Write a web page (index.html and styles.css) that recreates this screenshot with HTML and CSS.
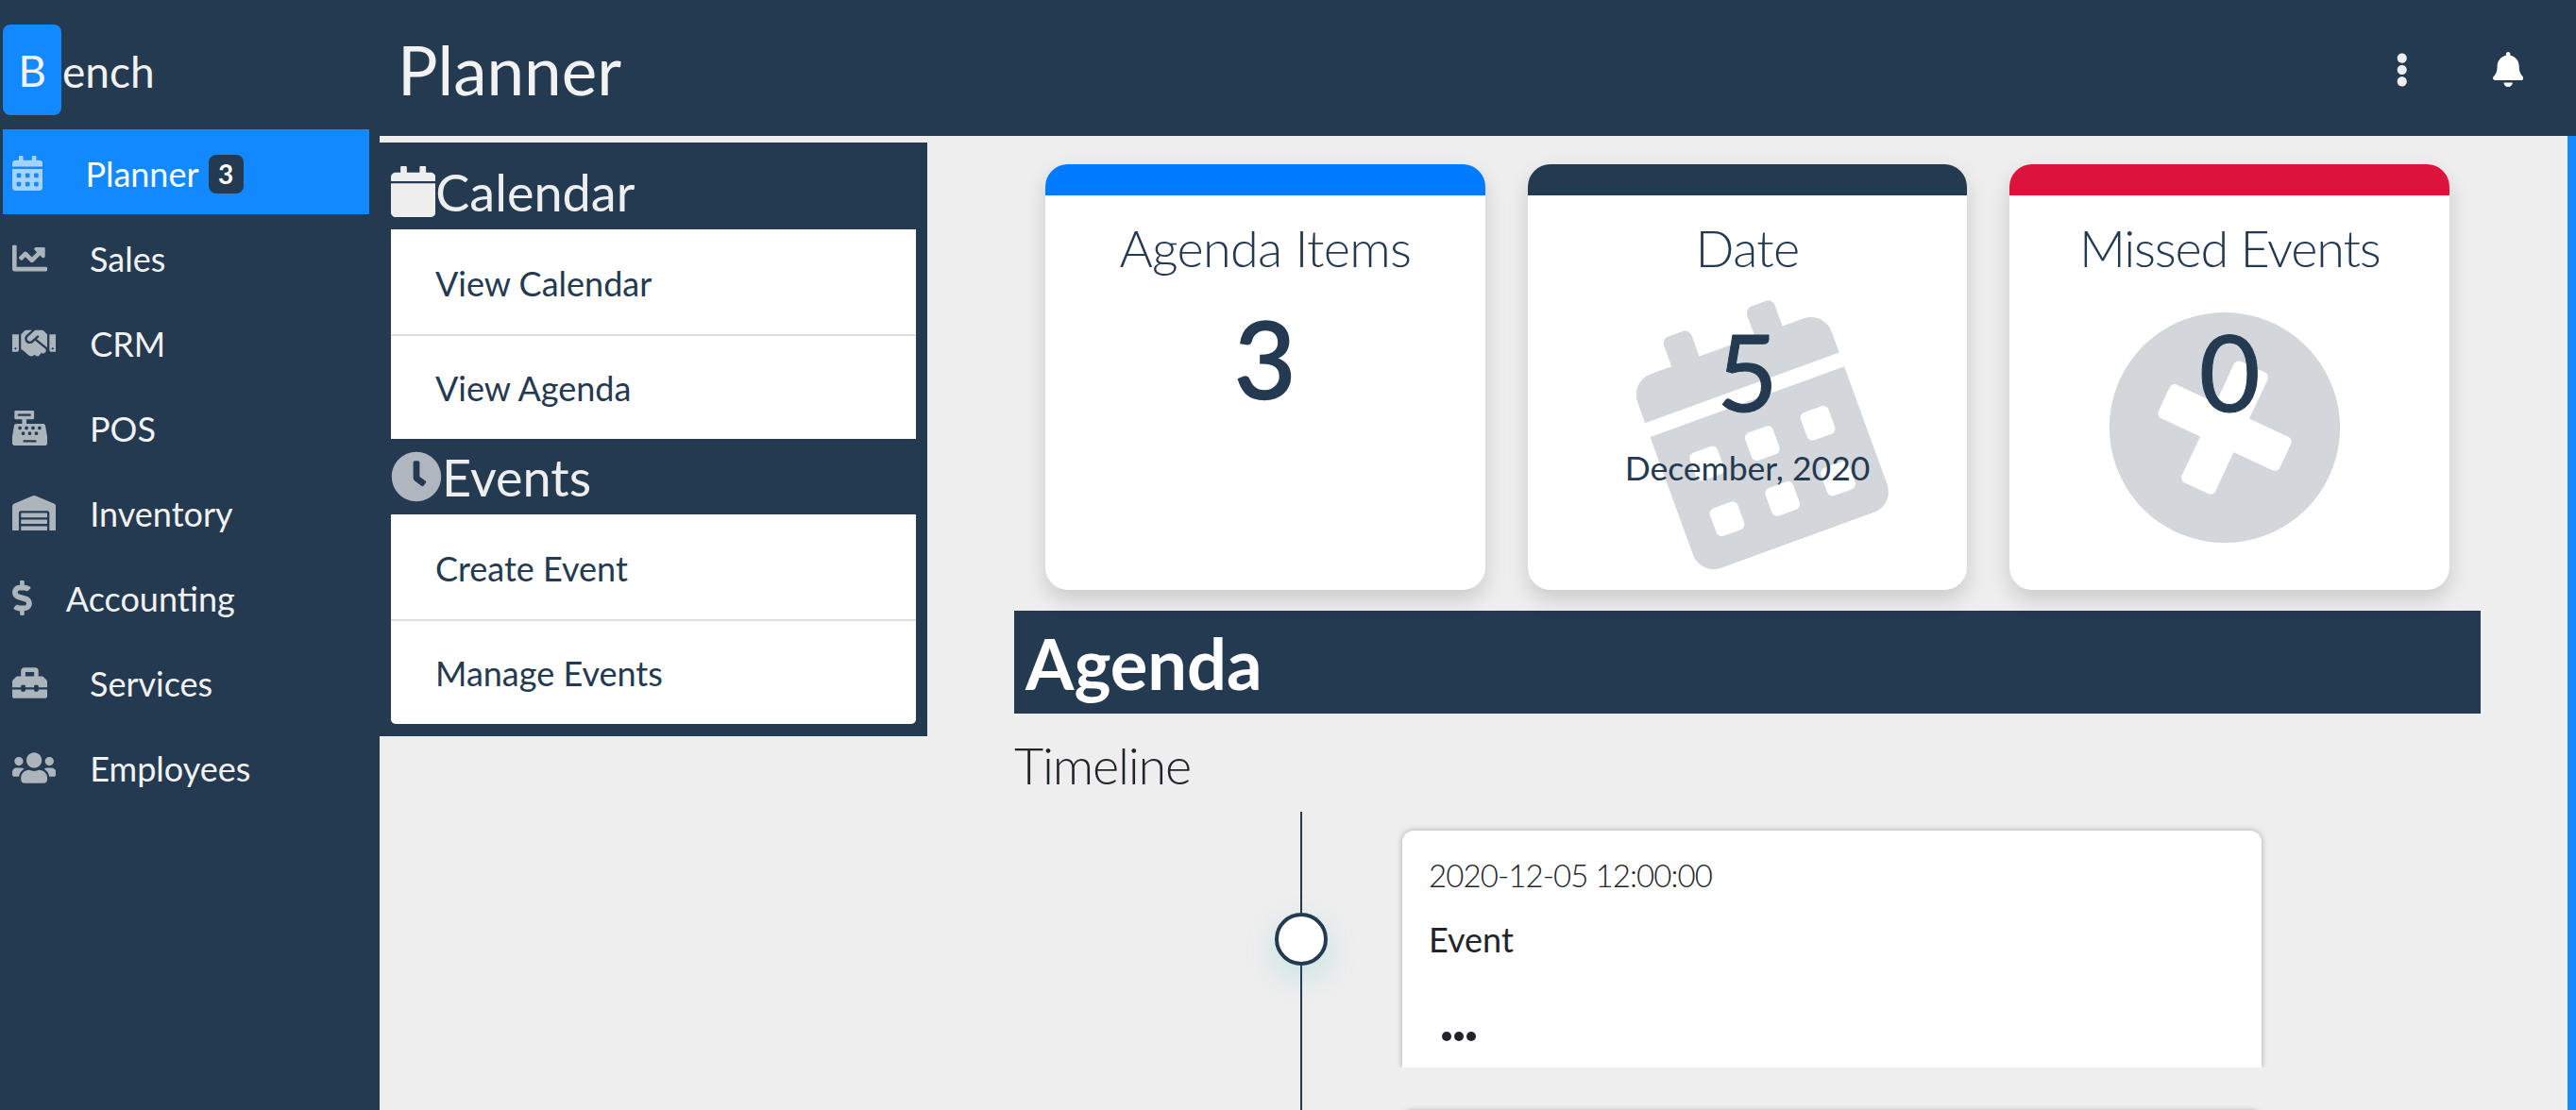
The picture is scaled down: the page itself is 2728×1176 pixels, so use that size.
FILE: index.html
```html
<!DOCTYPE html>
<html lang="en">
<head>
    <meta charset="UTF-8">
    <meta name="viewport" content="width=device-width, initial-scale=1.0">
    <title>Planner</title>
    <link rel="stylesheet" href="styles.css">
</head>
<body>
    <aside class="sidebar">
        <div class="brand"><span class="brand-mark">B</span><span class="brand-rest">ench</span></div>
        <nav class="nav">
            <a class="nav-item active">
                <svg class="nav-icon" viewBox="0 0 448 512"><path d="M0 464c0 26.5 21.5 48 48 48h352c26.5 0 48-21.5 48-48V192H0v272zm320-196c0-6.6 5.4-12 12-12h40c6.6 0 12 5.4 12 12v40c0 6.6-5.4 12-12 12h-40c-6.6 0-12-5.4-12-12v-40zm0 128c0-6.6 5.4-12 12-12h40c6.6 0 12 5.4 12 12v40c0 6.6-5.4 12-12 12h-40c-6.6 0-12-5.4-12-12v-40zM192 268c0-6.6 5.4-12 12-12h40c6.6 0 12 5.4 12 12v40c0 6.6-5.4 12-12 12h-40c-6.6 0-12-5.4-12-12v-40zm0 128c0-6.6 5.4-12 12-12h40c6.6 0 12 5.4 12 12v40c0 6.6-5.4 12-12 12h-40c-6.6 0-12-5.4-12-12v-40zM64 268c0-6.6 5.4-12 12-12h40c6.6 0 12 5.4 12 12v40c0 6.6-5.4 12-12 12H76c-6.6 0-12-5.4-12-12v-40zm0 128c0-6.6 5.4-12 12-12h40c6.6 0 12 5.4 12 12v40c0 6.6-5.4 12-12 12H76c-6.6 0-12-5.4-12-12v-40zM400 64h-48V16c0-8.8-7.2-16-16-16h-32c-8.8 0-16 7.2-16 16v48H160V16c0-8.8-7.2-16-16-16h-32c-8.8 0-16 7.2-16 16v48H48C21.5 64 0 85.5 0 112v48h448v-48c0-26.5-21.5-48-48-48z"/></svg>
                <span class="nav-label">Planner</span>
                <span class="nav-badge">3</span>
            </a>
            <a class="nav-item">
                <svg class="nav-icon" viewBox="0 0 512 512"><path d="M496 384H64V80c0-8.84-7.16-16-16-16H16C7.16 64 0 71.16 0 80v336c0 17.67 14.33 32 32 32h464c8.84 0 16-7.16 16-16v-32c0-8.84-7.16-16-16-16zM464 96H345.94c-21.38 0-32.09 25.85-16.97 40.97l32.4 32.4L288 242.75l-73.37-73.37c-12.5-12.5-32.76-12.5-45.25 0l-68.69 68.69c-6.25 6.25-6.25 16.38 0 22.63l22.62 22.62c6.25 6.25 16.38 6.25 22.63 0L192 237.25l73.37 73.37c12.5 12.5 32.76 12.5 45.25 0l96-96 32.4 32.4c15.12 15.12 40.97 4.41 40.97-16.97V112c.01-8.84-7.15-16-15.99-16z"/></svg>
                <span class="nav-label">Sales</span>
            </a>
            <a class="nav-item">
                <svg class="nav-icon" viewBox="0 0 640 512"><path d="M434.7 64h-85.9c-8 0-15.7 3-21.6 8.4l-98.3 90c-.1.1-.2.3-.3.4-16.6 15.6-16.3 40.5-2.1 56 12.7 13.9 39.4 17.6 56.1 2.7.1-.1.3-.1.4-.2l79.9-73.2c6.5-5.9 16.7-5.5 22.6 1 6 6.5 5.5 16.6-1 22.6l-26.1 23.9L504 313.8c2.9 2.4 5.5 5 7.9 7.7V128l-54.6-54.6c-5.9-6-14.1-9.4-22.6-9.4zM544 128.2v223.9c0 17.7 14.3 32 32 32h64V128.2h-96zm48 223.9c-8.8 0-16-7.2-16-16s7.2-16 16-16 16 7.2 16 16-7.2 16-16 16zM0 384h64c17.7 0 32-14.3 32-32V128.2H0V384zm48-63.9c8.8 0 16 7.2 16 16s-7.2 16-16 16-16-7.2-16-16c0-8.9 7.2-16 16-16zm435.9 18.6L334.6 217.5l-30 27.5c-29.7 27.1-75.2 24.5-101.7-4.4-26.9-29.4-24.8-74.9 4.4-101.7L289.1 64h-83.8c-8.5 0-16.6 3.4-22.6 9.4L128 128v223.9h18.3l90.5 81.9c27.4 22.3 67.7 18.1 90-9.3l.2-.2 17.9 15.5c15.9 13 39.4 10.5 52.3-5.4l31.4-38.6 5.4 4.4c13.7 11.1 33.9 9.1 45-4.7l9.5-11.7c11.2-13.8 9.1-33.9-4.6-45.1z"/></svg>
                <span class="nav-label near">CRM</span>
            </a>
            <a class="nav-item">
                <svg class="nav-icon" viewBox="0 0 512 512"><path d="M511.1 378.8l-26.7-160c-2.6-15.4-15.9-26.7-31.6-26.7H208v-64h96c8.8 0 16-7.2 16-16V16c0-8.8-7.2-16-16-16H48c-8.8 0-16 7.2-16 16v96c0 8.8 7.2 16 16 16h96v64H59.1c-15.6 0-29 11.3-31.6 26.7L.8 378.7c-.6 3.5-.9 7-.9 10.5V480c0 17.7 14.3 32 32 32h448c17.7 0 32-14.3 32-32v-90.7c.1-3.5-.2-7-.8-10.5zM280 248c0-8.8 7.2-16 16-16h16c8.8 0 16 7.2 16 16v16c0 8.8-7.2 16-16 16h-16c-8.8 0-16-7.2-16-16v-16zm-32 64h16c8.8 0 16 7.2 16 16v16c0 8.8-7.2 16-16 16h-16c-8.8 0-16-7.2-16-16v-16c0-8.8 7.2-16 16-16zm-32-80c8.8 0 16 7.2 16 16v16c0 8.8-7.2 16-16 16h-16c-8.8 0-16-7.2-16-16v-16c0-8.8 7.2-16 16-16h16zM80 80V48h192v32H80zm40 200h-16c-8.8 0-16-7.2-16-16v-16c0-8.8 7.2-16 16-16h16c8.8 0 16 7.2 16 16v16c0 8.8-7.2 16-16 16zm16 64v-16c0-8.8 7.2-16 16-16h16c8.8 0 16 7.2 16 16v16c0 8.8-7.2 16-16 16h-16c-8.8 0-16-7.2-16-16zm216 112c0 4.4-3.6 8-8 8H168c-4.4 0-8-3.6-8-8v-16c0-4.4 3.6-8 8-8h176c4.4 0 8 3.6 8 8v16zm24-112c0 8.8-7.2 16-16 16h-16c-8.8 0-16-7.2-16-16v-16c0-8.8 7.2-16 16-16h16c8.8 0 16 7.2 16 16v16zm48-80c0 8.8-7.2 16-16 16h-16c-8.8 0-16-7.2-16-16v-16c0-8.8 7.2-16 16-16h16c8.8 0 16 7.2 16 16v16z"/></svg>
                <span class="nav-label">POS</span>
            </a>
            <a class="nav-item">
                <svg class="nav-icon" viewBox="0 0 640 512"><path d="M504 352H136.4c-4.4 0-8 3.6-8 8l-.1 48c0 4.4 3.6 8 8 8H504c4.4 0 8-3.6 8-8v-48c0-4.4-3.6-8-8-8zm0 96H136.1c-4.4 0-8 3.6-8 8l-.1 48c0 4.4 3.6 8 8 8h368c4.4 0 8-3.6 8-8v-48c0-4.4-3.6-8-8-8zm0-192H136.6c-4.4 0-8 3.6-8 8l-.1 48c0 4.4 3.6 8 8 8H504c4.4 0 8-3.6 8-8v-48c0-4.4-3.6-8-8-8zm106.5-139L338.4 3.7a48.15 48.15 0 0 0-36.9 0L29.5 117C11.7 124.5 0 141.9 0 161.3V504c0 4.4 3.6 8 8 8h80c4.4 0 8-3.6 8-8V256c0-17.6 14.6-32 32.6-32h382.8c18 0 32.6 14.4 32.6 32v248c0 4.4 3.6 8 8 8h80c4.4 0 8-3.6 8-8V161.3c0-19.4-11.7-36.8-29.5-44.3z"/></svg>
                <span class="nav-label near">Inventory</span>
            </a>
            <a class="nav-item">
                <svg class="nav-icon" viewBox="0 0 288 512"><path d="M209.2 233.4l-108-31.6C88.7 198.2 80 186.5 80 173.5c0-16.3 13.2-29.5 29.5-29.5h66.3c12.2 0 24.2 3.7 34.2 10.5 6.1 4.1 14.3 3.1 19.5-2l34.8-34c7.1-6.9 6.1-18.4-1.8-24.5C238 74.8 207.4 64.1 176 64V16c0-8.8-7.2-16-16-16h-32c-8.8 0-16 7.2-16 16v48h-2.5C45.8 64-5.4 118.7.5 183.6c4.2 46.1 39.4 83.6 83.8 96.6l102.5 30c12.5 3.7 21.2 15.3 21.2 28.3 0 16.3-13.2 29.5-29.5 29.5h-66.3C100 368 88 364.3 78 357.5c-6.1-4.1-14.3-3.1-19.5 2l-34.8 34c-7.1 6.9-6.1 18.4 1.8 24.5 24.5 19.2 55.1 29.9 86.5 30v48c0 8.8 7.2 16 16 16h32c8.8 0 16-7.2 16-16v-48.2c46.6-.9 90.3-28.6 105.7-72.7 21.5-61.6-14.6-124.8-72.5-141.7z"/></svg>
                <span class="nav-label near">Accounting</span>
            </a>
            <a class="nav-item">
                <svg class="nav-icon" viewBox="0 0 512 512"><path d="M502.63 214.63l-45.25-45.25c-6-6-14.14-9.37-22.63-9.37H384V80c0-26.51-21.49-48-48-48H176c-26.51 0-48 21.49-48 48v80H77.25c-8.49 0-16.62 3.37-22.63 9.37L9.37 214.63c-6 6-9.37 14.14-9.37 22.63V320h128v-16c0-8.84 7.16-16 16-16h32c8.84 0 16 7.16 16 16v16h128v-16c0-8.84 7.16-16 16-16h32c8.84 0 16 7.16 16 16v16h128v-82.75c0-8.48-3.37-16.62-9.37-22.62zM320 160H192V96h128v64zm64 208c0 8.84-7.16 16-16 16h-32c-8.84 0-16-7.16-16-16v-16H192v16c0 8.84-7.16 16-16 16h-32c-8.84 0-16-7.16-16-16v-16H0v96c0 17.67 14.33 32 32 32h448c17.67 0 32-14.33 32-32v-96H384v16z"/></svg>
                <span class="nav-label">Services</span>
            </a>
            <a class="nav-item">
                <svg class="nav-icon" viewBox="0 0 640 512"><path d="M96 224c35.3 0 64-28.7 64-64s-28.7-64-64-64-64 28.7-64 64 28.7 64 64 64zm448 0c35.3 0 64-28.7 64-64s-28.7-64-64-64-64 28.7-64 64 28.7 64 64 64zm32 32h-64c-17.6 0-33.5 7.1-45.1 18.6 40.3 22.1 68.9 62 75.1 109.4h66c17.7 0 32-14.3 32-32v-32c0-35.3-28.7-64-64-64zm-256 0c61.9 0 112-50.1 112-112S381.9 32 320 32 208 82.1 208 144s50.1 112 112 112zm76.8 32h-8.3c-20.8 10-43.9 16-68.5 16s-47.6-6-68.5-16h-8.3C179.6 288 128 339.6 128 403.2V432c0 26.5 21.5 48 48 48h288c26.5 0 48-21.5 48-48v-28.8c0-63.6-51.6-115.2-115.2-115.2zm-223.7-13.4C161.5 263.1 145.6 256 128 256H64c-35.3 0-64 28.7-64 64v32c0 17.7 14.3 32 32 32h65.9c6.3-47.4 34.9-87.3 75.2-109.4z"/></svg>
                <span class="nav-label near">Employees</span>
            </a>
        </nav>
    </aside>

    <div class="page">
        <header class="topbar">
            <h1 class="page-title">Planner</h1>
            <div class="topbar-actions">
                <svg class="topbar-dots" viewBox="0 0 192 512"><path d="M96 184c39.8 0 72 32.2 72 72s-32.2 72-72 72-72-32.2-72-72 32.2-72 72-72zM24 80c0 39.8 32.2 72 72 72s72-32.2 72-72S135.8 8 96 8 24 40.2 24 80zm0 352c0 39.8 32.2 72 72 72s72-32.2 72-72-32.2-72-72-72-72 32.2-72 72z"/></svg>
                <svg class="topbar-bell" viewBox="0 0 448 512"><path d="M224 512c35.32 0 63.97-28.65 63.97-64H160.03c0 35.35 28.65 64 63.97 64zm215.39-149.71c-19.32-20.76-55.47-51.99-55.47-154.29 0-77.7-54.48-139.9-127.94-155.16V32c0-17.67-14.32-32-31.98-32s-31.98 14.33-31.98 32v20.84C118.56 68.1 64.08 130.3 64.08 208c0 102.3-36.15 133.53-55.47 154.29-6 6.45-8.66 14.16-8.61 21.71.11 16.4 12.98 32 32.1 32h383.8c19.12 0 32-15.6 32.1-32 .05-7.55-2.61-15.27-8.61-21.71z"/></svg>
            </div>
        </header>

        <div class="content">
            <section class="side-panel">
                <h2 class="panel-title">
                    <svg class="panel-icon light" viewBox="0 0 448 512"><path d="M96 12c0-6.6 5.4-12 12-12h40c6.6 0 12 5.4 12 12v52h128V12c0-6.6 5.4-12 12-12h40c6.6 0 12 5.4 12 12v52h48c26.5 0 48 21.5 48 48v32c0 4.4-3.6 8-8 8H8c-4.4 0-8-3.6-8-8v-32c0-26.5 21.5-48 48-48h48zM8 174h432c4.4 0 8 3.6 8 8v282c0 26.5-21.5 48-48 48H48c-26.5 0-48-21.500-48-48V182c0-4.400 3.600-8 8-8z"/></svg>Calendar
                </h2>
                <ul class="panel-list">
                    <li>View Calendar</li>
                    <li>View Agenda</li>
                </ul>
                <h2 class="panel-title">
                    <svg class="panel-icon" viewBox="0 0 512 512"><path d="M256 8C119 8 8 119 8 256s111 248 248 248 248-111 248-248S393 8 256 8zm92.49 313l-20 25a16 16 0 0 1-22.49 2.5l-67-49.72a40 40 0 0 1-15-31.23V112a16 16 0 0 1 16-16h32a16 16 0 0 1 16 16v144l58 42.5a16 16 0 0 1 2.49 22.5z"/></svg>Events
                </h2>
                <ul class="panel-list last">
                    <li>Create Event</li>
                    <li>Manage Events</li>
                </ul>
            </section>

            <main class="dashboard">
                <div class="stat-cards">
                    <div class="stat-card blue">
                        <h3 class="stat-title">Agenda Items</h3>
                        <div class="stat-value strong">3</div>
                    </div>
                    <div class="stat-card navy">
                        <svg class="stat-bg" viewBox="0 0 448 512"><path d="M0 464c0 26.5 21.5 48 48 48h352c26.5 0 48-21.5 48-48V192H0v272zm320-196c0-6.6 5.4-12 12-12h40c6.6 0 12 5.4 12 12v40c0 6.6-5.4 12-12 12h-40c-6.6 0-12-5.4-12-12v-40zm0 128c0-6.6 5.4-12 12-12h40c6.6 0 12 5.4 12 12v40c0 6.6-5.4 12-12 12h-40c-6.6 0-12-5.4-12-12v-40zM192 268c0-6.6 5.4-12 12-12h40c6.6 0 12 5.4 12 12v40c0 6.6-5.4 12-12 12h-40c-6.6 0-12-5.4-12-12v-40zm0 128c0-6.6 5.4-12 12-12h40c6.6 0 12 5.4 12 12v40c0 6.6-5.4 12-12 12h-40c-6.6 0-12-5.4-12-12v-40zM64 268c0-6.6 5.4-12 12-12h40c6.6 0 12 5.4 12 12v40c0 6.6-5.4 12-12 12H76c-6.6 0-12-5.4-12-12v-40zm0 128c0-6.6 5.4-12 12-12h40c6.6 0 12 5.4 12 12v40c0 6.6-5.4 12-12 12H76c-6.6 0-12-5.4-12-12v-40zM400 64h-48V16c0-8.8-7.2-16-16-16h-32c-8.8 0-16 7.2-16 16v48H160V16c0-8.8-7.2-16-16-16h-32c-8.8 0-16 7.2-16 16v48H48C21.5 64 0 85.5 0 112v48h448v-48c0-26.5-21.5-48-48-48z"/></svg>
                        <h3 class="stat-title">Date</h3>
                        <div class="stat-value low">5</div>
                        <div class="stat-sub">December, 2020</div>
                    </div>
                    <div class="stat-card red">
                        <svg class="stat-bg circle" viewBox="0 0 512 512"><path d="M256 8C119 8 8 119 8 256s111 248 248 248 248-111 248-248S393 8 256 8zm121.6 313.1c4.7 4.7 4.7 12.3 0 17L338 377.6c-4.7 4.7-12.3 4.7-17 0L256 312l-65.1 65.6c-4.7 4.7-12.3 4.7-17 0L134.4 338c-4.7-4.7-4.7-12.3 0-17l65.6-65-65.6-65.1c-4.7-4.7-4.7-12.3 0-17l39.6-39.6c4.7-4.7 12.3-4.7 17 0l65 65.7 65.1-65.6c4.7-4.7 12.3-4.7 17 0l39.6 39.6c4.7 4.7 4.7 12.3 0 17L312 256l65.6 65.1z"/></svg>
                        <h3 class="stat-title">Missed Events</h3>
                        <div class="stat-value low">0</div>
                    </div>
                </div>

                <h2 class="agenda-bar">Agenda</h2>
                <h3 class="timeline-title">Timeline</h3>

                <div class="timeline">
                    <div class="timeline-dot"></div>
                    <article class="event-card">
                        <div class="event-time">2020-12-05 12:00:00</div>
                        <div class="event-name">Event</div>
                        <div class="event-more"><span></span><span></span><span></span></div>
                    </article>
                    <article class="event-card"></article>
                </div>
            </main>
        </div>
    </div>
</body>
</html>
```

FILE: styles.css
```css
* {
    box-sizing: border-box;
}

html, body {
    height: 100%;
}

body {
    margin: 0;
    display: flex;
    overflow: hidden;
    font-family: Lato, "Open Sans", sans-serif;
    background-color: #eee;
    color: #243a50;
}

h1, h2, h3, ul {
    margin: 0;
    padding: 0;
}

/* sidebar */
.sidebar {
    width: 402px;
    flex-shrink: 0;
    background-color: #243a50;
    color: #f2f2f2;
    padding: 26px 0 0 3px;
}

.brand {
    display: flex;
    align-items: center;
    height: 96px;
    margin-bottom: 15px;
    font-size: 46px;
}

.brand-mark {
    width: 62px;
    height: 96px;
    line-height: 98px;
    text-align: center;
    background-color: #1289fe;
    border-radius: 8px;
}

.brand-rest {
    margin: 3px 0 0 1px;
}

.nav-item {
    display: flex;
    align-items: center;
    width: 388px;
    height: 90px;
    padding-left: 10px;
    font-size: 36px;
}

.nav-item.active {
    background-color: #1289fe;
    color: #fff;
}

.nav-icon {
    height: 37px;
    margin-top: 3px;
    fill: #fff;
    opacity: .62;
}

.nav-label {
    margin-left: 45px;
    padding-top: 3px;
}

.nav-label.near {
    margin-left: 36px;
}

.nav-badge {
    margin: 5px 0 0 10px;
    width: 37px;
    height: 41px;
    line-height: 41px;
    text-align: center;
    font-size: 28px;
    font-weight: 700;
    color: #fff;
    background-color: #243a50;
    border-radius: 8px;
}

/* top bar */
.page {
    flex: 1;
    min-width: 0;
    display: flex;
    flex-direction: column;
    border-right: 9px solid #1289fe;
}

.topbar {
    height: 144px;
    flex-shrink: 0;
    margin-right: -9px;
    display: flex;
    align-items: center;
    justify-content: space-between;
    padding: 0 56px 0 19px;
    background-color: #243a50;
    color: #f2f2f2;
}

.page-title {
    margin-top: 3px;
    font-size: 71px;
    font-weight: 400;
}

.topbar-actions {
    display: flex;
    align-items: center;
    gap: 89px;
    margin-top: 3px;
}

.topbar-dots {
    height: 36px;
    fill: #eee;
}

.topbar-bell {
    height: 37px;
    fill: #fff;
}

/* left panel */
.content {
    flex: 1;
    display: flex;
    align-items: flex-start;
}

.side-panel {
    width: 580px;
    flex-shrink: 0;
    margin-top: 7px;
    padding: 0 12px 13px;
    background-color: #243a50;
}

.panel-title {
    display: flex;
    align-items: center;
    height: 92px;
    padding-top: 12px;
    font-size: 54px;
    font-weight: 400;
    color: #eee;
}

.panel-title + .panel-list + .panel-title {
    height: 80px;
    padding-top: 0;
}

.panel-icon {
    height: 54px;
    fill: #b0b6bf;
}

.panel-icon.light {
    fill: #eee;
}

.panel-list {
    list-style: none;
    background-color: #fff;
}

.panel-list.last {
    border-radius: 0 0 5px 5px;
}

.panel-list li {
    height: 111px;
    line-height: 110px;
    padding-left: 47px;
    font-size: 36px;
    color: #243a50;
}

.panel-list li:first-child {
    line-height: 115px;
}

.panel-list li + li {
    border-top: 2px solid #dfdfdf;
}

/* dashboard */
.dashboard {
    flex: 1;
    min-width: 0;
    padding: 30px 92px 0 92px;
}

.stat-cards {
    display: flex;
    gap: 45px;
    padding: 0 33px;
}

.stat-card {
    position: relative;
    flex: 1;
    height: 451px;
    text-align: center;
    background-color: #fff;
    border-top: 33px solid #007bff;
    border-radius: 24px;
    box-shadow: 0 10px 22px rgba(0, 0, 0, .15);
    overflow: hidden;
}

.stat-card.navy {
    border-top-color: #243a50;
}

.stat-card.red {
    border-top-color: #dc143c;
}

.stat-bg {
    position: absolute;
    left: 50%;
    top: 123px;
    width: 220px;
    height: 250px;
    margin-left: -100px;
    fill: #d3d6db;
    transform: rotate(-20deg);
}

.stat-bg.circle {
    width: 252px;
    height: 252px;
    top: 120px;
    margin-left: -131px;
}

.stat-title {
    position: relative;
    margin-top: 22px;
    font-size: 54px;
    font-weight: 300;
    line-height: 68px;
    letter-spacing: -.7px;
}

.red .stat-title {
    letter-spacing: -1.2px;
}

.stat-value {
    position: relative;
    font-size: 112px;
    line-height: 136px;
    margin-top: 14px;
    -webkit-text-stroke: 1px #243a50;
}

.stat-value.strong {
    -webkit-text-stroke-width: 2.5px;
}

.stat-value.low {
    margin-top: 28px;
}

.stat-sub {
    position: relative;
    margin-top: 13px;
    font-size: 35.5px;
}

.agenda-bar {
    height: 109px;
    margin-top: 22px;
    padding-left: 12px;
    line-height: 112px;
    font-size: 74px;
    font-weight: 700;
    color: #fff;
    background-color: #243a50;
}

.timeline-title {
    margin-top: 22px;
    font-size: 54px;
    font-weight: 300;
    line-height: 66px;
    letter-spacing: -1.2px;
    color: #212529;
}

/* timeline */
.timeline {
    position: relative;
    margin-top: 16px;
    padding: 20px 0 0 411px;
}

.timeline::before {
    content: "";
    position: absolute;
    left: 303px;
    top: 0;
    bottom: -200px;
    width: 2px;
    background-color: #243a50;
}

.timeline-dot {
    position: absolute;
    left: 276px;
    top: 107px;
    width: 56px;
    height: 56px;
    background-color: #fff;
    border: 4px solid #243a50;
    border-radius: 50%;
    box-shadow: 0 12px 34px rgba(0, 170, 200, .18);
}

.event-card {
    width: 910px;
    height: 251px;
    margin-bottom: 46px;
    padding: 27px 28px 0;
    background-color: #fff;
    border-radius: 12px 12px 0 0;
    box-shadow: 0 0 6px rgba(0, 0, 0, .3);
    clip-path: inset(-10px -10px 0 -10px);
}

.event-time {
    font-size: 33px;
    font-weight: 300;
    letter-spacing: -.9px;
    color: #212529;
}

.event-name {
    margin-top: 26px;
    font-size: 36px;
    color: #212529;
}

.event-more {
    display: flex;
    gap: 3px;
    margin: 76px 0 0 14px;
}

.event-more span {
    width: 10px;
    height: 10px;
    border-radius: 50%;
    background-color: #212529;
}
```
